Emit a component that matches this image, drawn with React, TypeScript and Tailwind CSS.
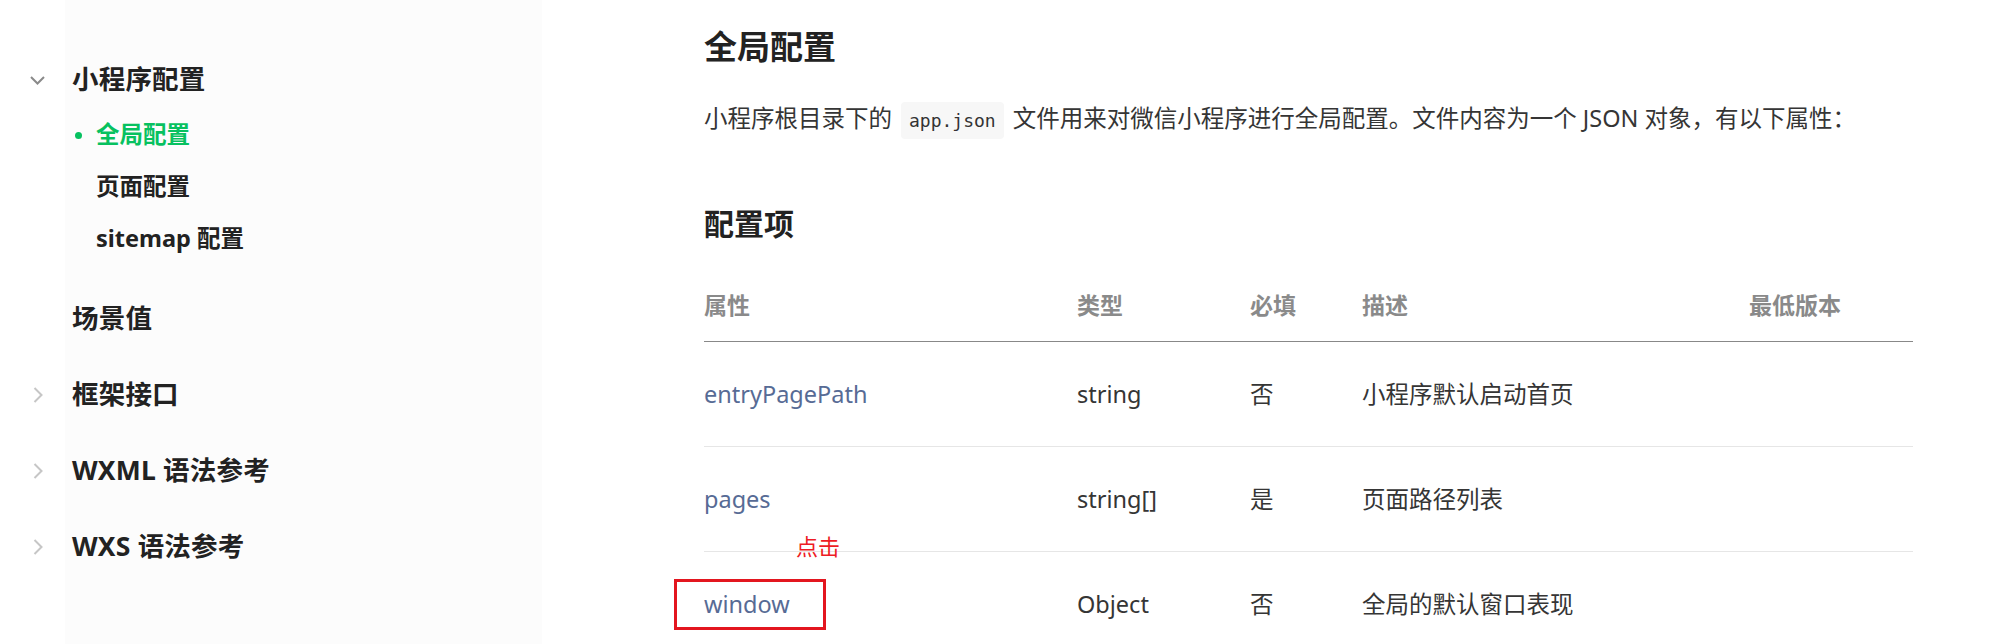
import React from "react";

const FONT = '"Noto Sans", "Noto Sans CJK SC", sans-serif';

function ChevronDown() {
  return (
    <svg width="15" height="9" viewBox="0 0 15 9" fill="none">
      <polyline points="1,1 7.5,7.5 14,1" stroke="#8a8a8a" strokeWidth="2" />
    </svg>
  );
}

function ChevronRight() {
  return (
    <svg width="10" height="16" viewBox="0 0 10 16" fill="none">
      <polyline points="1.5,1 8.5,8 1.5,15" stroke="#c6c6c6" strokeWidth="2" />
    </svg>
  );
}

interface NavRowProps {
  label: string;
  icon?: "down" | "right";
  className?: string;
}

function NavRow({ label, icon, className }: NavRowProps) {
  return (
    <div className={"flex items-center " + (className ?? "")}>
      <span className="ml-[-35px] mr-[27px] flex w-[15px] justify-center">
        {icon === "down" && <ChevronDown />}
        {icon === "right" && <ChevronRight />}
      </span>
      <span className="text-[26.5px] font-bold tracking-[0.2px] text-[#222]">{label}</span>
    </div>
  );
}

function SubRow({ label, active }: { label: string; active?: boolean }) {
  return (
    <div className="flex h-[52px] items-center pl-[7px]">
      <span className="flex w-[24px] items-center">
        {active && <span className="ml-[3px] h-[7px] w-[7px] rounded-full bg-[#07c160]" />}
      </span>
      <span className={"text-[23.5px] font-bold " + (active ? "text-[#07c160]" : "text-[#222]")}>
        {label}
      </span>
    </div>
  );
}

function Sidebar() {
  return (
    <aside className="ml-[65px] h-[644px] w-[477px] shrink-0 bg-[#fcfcfc] pt-[54px]">
      <NavRow label="小程序配置" icon="down" className="h-[52px]" />
      <div className="mt-[3px]">
        <SubRow label="全局配置" active />
        <SubRow label="页面配置" />
        <SubRow label="sitemap 配置" />
      </div>
      <div className="mt-[16px]">
        <NavRow label="场景值" className="h-[76px]" />
        <NavRow label="框架接口" icon="right" className="h-[76px]" />
        <NavRow label="WXML 语法参考" icon="right" className="h-[76px]" />
        <NavRow label="WXS 语法参考" icon="right" className="h-[76px]" />
      </div>
    </aside>
  );
}

const rows = [
  { name: "entryPagePath", type: "string", required: "否", desc: "小程序默认启动首页" },
  { name: "pages", type: "string[]", required: "是", desc: "页面路径列表" },
  { name: "window", type: "Object", required: "否", desc: "全局的默认窗口表现" },
];

const cols = "grid grid-cols-[373px_173px_112px_387px_1fr]";

function ConfigTable() {
  return (
    <div className="mt-[26px] w-[1209px]">
      <div className={cols + " h-[72px] items-center border-b border-[#888] text-[23px] font-bold text-[#8a8a8a]"}>
        <div>属性</div>
        <div>类型</div>
        <div>必填</div>
        <div>描述</div>
        <div>最低版本</div>
      </div>
      {rows.map((row, index) => (
        <div
          key={row.name}
          className={cols + " h-[105px] items-center border-b border-[#e6e6e6] text-[23.5px] leading-[32px] text-[#353535]"}
        >
          <div className="relative text-[#576b95]">
            {row.name}
            {index === 2 && (
              <>
                <span className="absolute left-[92px] top-[-55px] text-[22px] leading-[26px] text-[#ee1c25]">
                  点击
                </span>
                <span className="absolute left-[-30px] top-[-9px] h-[51px] w-[152px] border-[3px] border-[#e3161f]" />
              </>
            )}
          </div>
          <div>{row.type}</div>
          <div>{row.required}</div>
          <div>{row.desc}</div>
          <div />
        </div>
      ))}
    </div>
  );
}

export default function App() {
  return (
    <div className="flex h-[644px] w-[1999px] overflow-hidden bg-white" style={{ fontFamily: FONT }}>
      <Sidebar />
      <main className="flex-1 pl-[162px] pr-[86px]">
        <h1 className="mt-[24px] h-[46px] text-[33px] font-bold leading-[46px] text-[#222]">全局配置</h1>
        <p className="mt-[28px] h-[40px] text-[23.5px] leading-[40px] text-[#353535]">
          小程序根目录下的
          <code
            className="mx-[9px] inline-block rounded-[4px] bg-[#f7f7f7] px-[8px] text-[18px] leading-[37px] text-[#333]"
            style={{ fontFamily: '"DejaVu Sans Mono", monospace' }}
          >
            app.json
          </code>
          文件用来对微信小程序进行全局配置。文件内容为一个 JSON 对象，有以下属性：
        </p>
        <h2 className="mt-[66px] h-[40px] text-[30px] font-bold leading-[40px] text-[#222]">配置项</h2>
        <ConfigTable />
      </main>
    </div>
  );
}
